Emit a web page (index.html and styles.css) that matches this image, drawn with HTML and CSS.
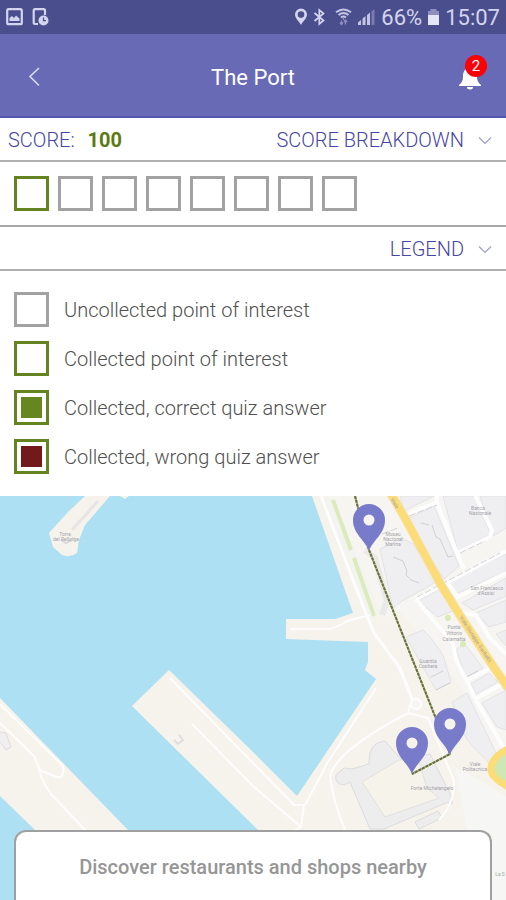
FILE: index.html
```html
<!DOCTYPE html>
<html lang="en">
<head>
    <meta charset="UTF-8">
    <meta name="viewport" content="width=device-width, initial-scale=1.0">
    <title>The Port</title>
    <link rel="stylesheet" href="styles.css">
</head>
<body>
    <div class="app">
        <div class="status-bar">
            <div class="status-group">
                <svg width="17" height="18" viewBox="0 0 17 18">
                    <rect x="1.2" y="1.2" width="14.6" height="15" rx="1.5" fill="none" stroke="#d3d5ee" stroke-width="2.2"/>
                    <path d="M3.5 13V10l2.5-2 2 2 2-2.5 3.5 3V13z" fill="#d3d5ee"/>
                </svg>
                <svg width="17" height="18" viewBox="0 0 17 18">
                    <path d="M13 7V2.5Q13 1.2 11.7 1.2H3Q1.7 1.2 1.7 2.5V15Q1.7 16 3 16H6" fill="none" stroke="#d3d5ee" stroke-width="2.2"/>
                    <circle cx="11.5" cy="12.5" r="5" fill="#d3d5ee"/>
                    <path d="M11.5 9.5V12.7H14" fill="none" stroke="#4b4e8c" stroke-width="1.3"/>
                </svg>
            </div>
            <div class="status-group status-right">
                <svg width="14" height="18" viewBox="0 0 14 18">
                    <path d="M7 17C5.5 13.5 1 10.5 1 6.5a6 6 0 0 1 12 0C13 10.5 8.5 13.5 7 17zM7 3.3a3.3 3.3 0 1 0 0 6.6a3.3 3.3 0 0 0 0-6.6z" fill="#d3d5ee" fill-rule="evenodd"/>
                </svg>
                <svg width="13" height="18" viewBox="0 0 13 18">
                    <path d="M1.5 5l9 7.5L6.3 16V2l4.2 3.5L1.5 13" fill="none" stroke="#d3d5ee" stroke-width="1.7"/>
                </svg>
                <svg class="wifi" width="17" height="18" viewBox="0 0 17 18">
                    <path d="M1 4.3Q8.5-1.3 16 4.3M3.5 7Q8.5 3 13.5 7M6 9.5Q8.5 7.5 11 9.5" fill="none" stroke="#c3c5e3" stroke-width="2"/>
                    <path d="M8.5 9v3M6.5 12.5v4M5 14.5l1.5 2 1.5-2M10.5 16.5v-4M9 14l1.5-2 1.5 2" fill="none" stroke="#8d90bd" stroke-width="1.3"/>
                </svg>
                <svg width="19" height="18" viewBox="0 0 19 18">
                    <path d="M1 17v-2.5l3-2.5v5zM5.5 17v-6.5l3-2.5v9zM10 17V7l3-2.5V17z" fill="#c3c5e3"/>
                    <path d="M14.5 17V3.5L17.5 1v16z" fill="#797cb0"/>
                </svg>
                <span>66%</span>
                <svg class="battery" width="13" height="18" viewBox="0 0 13 18">
                    <path d="M3.5 1h6v2H12v4H1V3h2.5z" fill="#8d90bd"/>
                    <path d="M1 7h11v10H1z" fill="#e4e5f5"/>
                </svg>
                <span>15:07</span>
            </div>
        </div>

        <header class="header">
            <button class="icon-button" aria-label="Back">
                <svg width="40" height="40" viewBox="0 0 40 40">
                    <path d="M23 11l-9 8.5 9 9" fill="none" stroke="#d9daf3" stroke-width="1.6"/>
                </svg>
            </button>
            <h1>The Port</h1>
            <button class="icon-button" aria-label="Notifications">
                <svg width="40" height="40" viewBox="0 0 40 40">
                    <path d="M20 10.5c-6 1-7 5-7 9 0 4-1 6-4 8.5v1h22v-1c-3-2.5-4-4.5-4-8.5 0-4-1-8-7-9z" fill="#fff"/>
                    <path d="M17 30h6a3 2.5 0 0 1-6 0z" fill="#fff"/>
                </svg>
                <span class="badge">2</span>
            </button>
        </header>

        <section class="bar">
            <div class="score">SCORE: <strong>100</strong></div>
            <button class="toggle">
                SCORE BREAKDOWN
                <svg width="14" height="9" viewBox="0 0 14 9"><path d="M1 1.5l6 6 6-6" fill="none" stroke="#9c9cd3" stroke-width="1.2"/></svg>
            </button>
        </section>

        <section class="progress">
            <span class="box collected"></span>
            <span class="box"></span>
            <span class="box"></span>
            <span class="box"></span>
            <span class="box"></span>
            <span class="box"></span>
            <span class="box"></span>
            <span class="box"></span>
        </section>

        <section class="bar bar-end">
            <button class="toggle">
                LEGEND
                <svg width="14" height="9" viewBox="0 0 14 9"><path d="M1 1.5l6 6 6-6" fill="none" stroke="#9c9cd3" stroke-width="1.2"/></svg>
            </button>
        </section>

        <ul class="legend">
            <li><span class="box"></span>Uncollected point of interest</li>
            <li><span class="box collected"></span>Collected point of interest</li>
            <li><span class="box collected correct"></span>Collected, correct quiz answer</li>
            <li><span class="box collected wrong"></span>Collected, wrong quiz answer</li>
        </ul>

        <main class="map">
            <svg class="map-canvas" viewBox="0 0 506 404" preserveAspectRatio="xMidYMin slice">
                <defs>
                    <path id="pin" d="M0 0C-4-11-16-17-16-31a16 16 0 0 1 32 0C16-17 4-11 0 0zM0-36.5a5.5 5.5 0 1 0 0 11a5.5 5.5 0 0 0 0-11z" fill="#787bc9" fill-rule="evenodd"/>
                </defs>

                <!-- land -->
                <g fill="#f6f3ec">
                    <path d="M85 0L68 16 49 37 53 51 62 59Q70 62 77 57L79 44 85 29 110 0zM120 0h9l-4 3z"/>
                    <path d="M0 202L128 334 200 404H110L35 334 0 300z"/>
                    <path d="M312 0L353 117 335 123H286V143L368 146V166L365 174 376 183 297 300 253 256 169 174 132 210 262 338 330 404H506V0z"/>
                </g>
                <path d="M328 0L383 122 400 115 460 190 506 275V0z" fill="#f6f5f2"/>
                <path d="M455 270L506 300V404H480z" fill="#f6f6f4"/>
                <path d="M72 34L98 5" fill="none" stroke="#e6e5e4" stroke-width="3"/>
                <path d="M61 44l5 3 6-3" fill="none" stroke="#d9d9dc" stroke-width="2"/>
                <path d="M0 236l6 1 5 14-5 3-6-8" fill="#f0eeee" stroke="#dedee0"/>
                <path d="M174 244l4 4 5-4-4-5" fill="none" stroke="#dedee0" stroke-width="2"/>

                <!-- park strips -->
                <g fill="none">
                    <path d="M326 3L345 53L354 70L374 119" stroke="#f3f4ef" stroke-width="13"/>
                    <path d="M333 4L351 54M354 62L374 120" stroke="#dcebbd" stroke-width="4"/>
                    <path d="M365 54L375 62 387 105 382 119" stroke="#ebe9e8" stroke-width="6"/>
                </g>

                <!-- buildings -->
                <g fill="#efeff1" stroke="#e3e3e6">
                    <path d="M380 53L402 42 413 48 438 85 402 105 393 112z"/>
                    <path d="M404 25L434 10 459 70 444 83z"/>
                    <path d="M400 0H434L404 15z"/>
                    <path d="M443 0H473L491 38 458 55z"/>
                    <path d="M480 0H506V32L493 40z"/>
                    <path d="M448 85L506 58V75L456 98z"/>
                    <path d="M462 107L506 82V100L473 114z"/>
                    <path d="M418 105L440 93 453 115 438 121z"/>
                    <path d="M476 117L506 104V126L489 131z"/>
                    <path d="M406 141L423 134 431 142 443 159 451 186 436 194z"/>
                    <path d="M456 154L464 147 483 172 466 181z"/>
                    <path d="M471 188L489 177 498 186 476 198z"/>
                    <path d="M482 207L506 194V234L497 231z"/>
                    <path d="M452 206L467 197 497 259 490 268 467 244z"/>
                    <path d="M496 138L506 134V150z"/>
                </g>
                <g fill="#eeedee" stroke="#dcdcdf">
                    <path d="M336 279Q334 288 344 289L350 286 370 333H384L448 306Q455 312 451 300L430 258 400 262 385 245Q368 246 369 268L352 273 344 272Z"/>
                    <path d="M415 326L438 315 442 322 419 333z"/>
                </g>
                <path d="M362 286L399 264 418 262 427 292 439 302 385 321z" fill="#f6f3ea" stroke="#e2e1de"/>
                <path d="M393 61l10 4 4 10-1 4 5 5 8 3M421 27l8 2M432 29l4 12 4 2 8 18 5-1M431 181l12-6M436 194l14-7M466 181l12-6" fill="none" stroke="#d0d0d3"/>

                <!-- streets -->
                <g fill="none" stroke="#fdfdfd" stroke-linejoin="round">
                    <g stroke-width="4">
                        <path d="M404 20L437 6V0M437 6L452 45 464 73M457 57L490 41 492 34 475 0M416 103L506 55"/>
                        <path d="M416 103L433 124 453 147 456 164 468 187 476 204 506 256M456 102L506 77M463 117L476 119 489 141 506 158M467 184L489 173M477 202L502 188M447 86L457 100"/>
                    </g>
                    <path d="M321 0L363 110 374 137 400 172 412 203" stroke-width="3"/>
                    <path d="M290 133H330Q340 130 347 125L370 119M395 163L412 203 408 217Q335 255 330 281Q333 305 345 334M408 217L428 222 454 285Q455 307 439 324M376 192L328 266 305 309H294L170 182M304 309L301 331 253 290 192 228M301 331L294 335" stroke-width="2"/>
                    <path d="M0 208L63 270Q65 285 54 280L39 274Q43 288 51 298L88 337M0 227L34 260 40 274" stroke-width="2"/>
                    <circle cx="416" cy="208" r="5" fill="#f7f5f0" stroke-width="2"/>
                </g>
                <path d="M409 20L437 9M460 57L485 45M417 101L500 57M382 38L398 32" fill="none" stroke="#d2d2d5" stroke-dasharray="7 2"/>

                <!-- main road and roundabout -->
                <path d="M391 -2L405 22 441 89 461 121 491 167 508 192" fill="none" stroke="#f5e2ad" stroke-width="9"/>
                <path d="M391 -2L405 22 441 89 461 121 491 167 508 192" fill="none" stroke="#fcdc76" stroke-width="7"/>
                <path d="M510 252Q487 263 492 278Q497 285 510 292" fill="#cfe8b3" stroke="#fcdc76" stroke-width="7"/>
                <circle cx="448" cy="122" r="3" fill="#d9eab5"/>
                <circle cx="463" cy="148" r="3" fill="#d9eab5"/>

                <g class="map-labels">
                    <text x="65" y="40">Torre</text>
                    <text x="66" y="45">del Rellotge</text>
                    <text x="393" y="40">Museu</text>
                    <text x="393" y="45">Nacional</text>
                    <text x="393" y="50">Marina</text>
                    <text x="478" y="14">Banca</text>
                    <text x="480" y="19">Nazionale</text>
                    <text x="487" y="94">San Francesco</text>
                    <text x="486" y="99">d'Assisi</text>
                    <text x="454" y="133">Punta</text>
                    <text x="454" y="139">Vittorio</text>
                    <text x="454" y="145">Calamatta</text>
                    <text x="428" y="167">Guardia</text>
                    <text x="428" y="172">Costiera</text>
                    <text x="475" y="270">Viale</text>
                    <text x="475" y="275">Politecnica</text>
                    <text x="432" y="294">Forte Michelangelo</text>
                    <text x="500" y="380">La S</text>
                    <text transform="translate(474 144) rotate(57)">Viale Giuseppe Garibaldi</text>
                    <text transform="translate(393 8) rotate(60)">Viale</text>
                </g>

                <!-- route -->
                <path d="M355 0L369 54 450 258 412 278" fill="none" stroke="#b4ba92" stroke-width="2"/>
                <path d="M355 0L369 54 450 258 412 278" fill="none" stroke="#66713a" stroke-width="2" stroke-dasharray="3 1"/>
                <use href="#pin" x="369" y="55"/>
                <use href="#pin" x="450" y="259"/>
                <use href="#pin" x="412" y="278"/>
            </svg>
            <button class="discover">Discover restaurants and shops nearby</button>
        </main>
    </div>
</body>
</html>
```

FILE: styles.css
```css
* {
    box-sizing: border-box;
}

body {
    margin: 0;
    font-family: Roboto, "Liberation Sans", sans-serif;
    font-size: 20px;
    color: #505050;
    background: #fff;
}

button {
    padding: 0;
    border: none;
    background: none;
    font: inherit;
    color: inherit;
    cursor: pointer;
}

svg {
    display: block;
}

.app {
    display: flex;
    flex-direction: column;
    min-height: 100vh;
}

.status-bar {
    display: flex;
    justify-content: space-between;
    align-items: center;
    height: 34px;
    padding: 0 6px;
    background: #4b4e8c;
    color: #d3d5ee;
    font-size: 22px;
}

.status-group {
    display: flex;
    align-items: center;
    gap: 9px;
}

.status-right {
    gap: 5px;
}

.wifi {
    margin-left: 4px;
}

.header {
    display: flex;
    justify-content: space-between;
    align-items: center;
    height: 84px;
    padding: 4px 16px 0;
    background: #686ab6;
    border-bottom: 2px solid #5256ae;
    color: #fff;
}

.header h1 {
    margin: 0;
    font-size: 22px;
    font-weight: 400;
}

.icon-button {
    position: relative;
}

.badge {
    position: absolute;
    top: -2px;
    right: 3px;
    width: 22px;
    height: 22px;
    border-radius: 50%;
    background: #fb0207;
    font-size: 15px;
    line-height: 22px;
    text-align: center;
}

.bar {
    display: flex;
    justify-content: space-between;
    align-items: center;
    height: 44px;
    padding: 2px 14px 0 8px;
    border-bottom: 2px solid #b0b0b0;
    color: #4545a5;
    font-weight: 300;
}

.bar-end {
    justify-content: flex-end;
}

.score strong {
    margin-left: 8px;
    color: #5c7a14;
    font-weight: 700;
}

.toggle {
    display: flex;
    align-items: center;
    gap: 14px;
}

.progress {
    display: flex;
    gap: 9px;
    padding: 14px;
    border-bottom: 2px solid #a8a8a8;
}

.box {
    flex: none;
    width: 35px;
    height: 35px;
    border: 3px solid #a2a2a2;
}

.box.collected {
    border-color: #648420;
}

.box.correct,
.box.wrong {
    padding: 4px;
    background-clip: content-box;
}

.box.correct {
    background-color: #66871f;
}

.box.wrong {
    background-color: #73191c;
}

.legend {
    display: flex;
    flex-direction: column;
    gap: 14px;
    margin: 0;
    padding: 21px 14px 22px;
    list-style: none;
    font-weight: 300;
}

.legend li {
    display: flex;
    align-items: center;
    gap: 15px;
}

.map {
    position: relative;
    flex: 1;
    min-height: 320px;
    overflow: hidden;
    background: #aee0f3;
}

.map-canvas {
    position: absolute;
    width: 100%;
    height: 100%;
}

.map-labels {
    font-size: 5px;
    fill: #a3a3a8;
    text-anchor: middle;
}

/* bottom sheet over the map */
.discover {
    position: absolute;
    right: 14px;
    bottom: 0;
    left: 14px;
    height: 70px;
    padding-top: 2px;
    border: 2px solid #a0a0a0;
    border-bottom: none;
    border-radius: 12px 12px 0 0;
    background: #fff;
    color: #969696;
    font-weight: 500;
}
```
